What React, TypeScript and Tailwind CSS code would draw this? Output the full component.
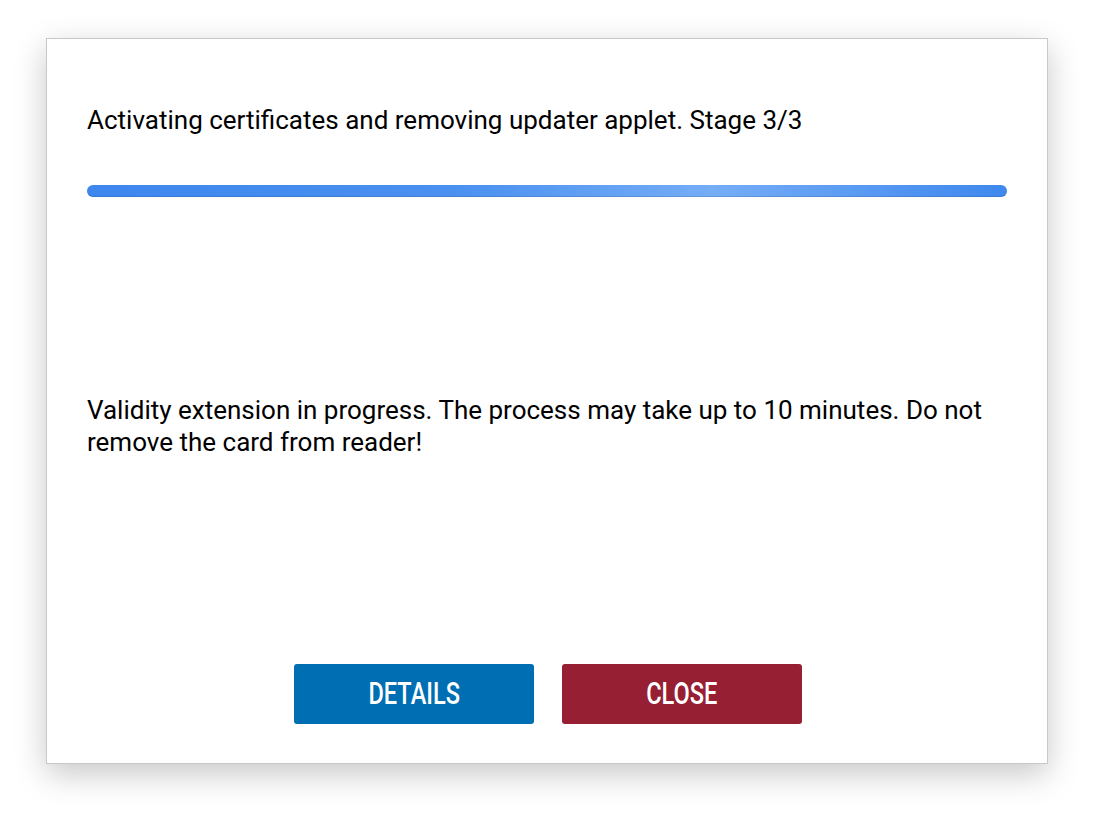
import React from 'react';

const App = () => {
  return (
    <div className="w-[1094px] h-[818px] bg-white pt-[38px] pl-[46px] font-['Roboto',sans-serif]">
      <div className="w-[1002px] h-[726px] bg-white border border-[#c8c8c8] shadow-[0_10px_30px_rgba(0,0,0,0.22)] flex flex-col px-[40px]">
        {/* Stage label */}
        <p className="mt-[65px] text-[26px] leading-[32px] text-black">
          Activating certificates and removing updater applet. Stage 3/3
        </p>

        {/* Progress bar */}
        <div className="mt-[49px] h-[12px] rounded-full bg-[linear-gradient(90deg,#3e86ee_0%,#4a90f0_40%,#75adf6_68%,#4f93f1_90%,#3f88ee_100%)] shadow-[inset_0_-1px_0_rgba(0,0,0,0.12)]" />

        {/* Info text */}
        <p className="mt-[197px] text-[26px] leading-[32px] text-black">
          Validity extension in progress. The process may take up to 10 minutes. Do not
          remove the card from reader!
        </p>

        {/* Buttons */}
        <div className="mt-auto mb-[39px] ml-[2px] flex justify-center gap-[28px]">
          <button className="w-[240px] h-[60px] rounded-[3px] bg-[#006eb3] text-white flex items-center justify-center">
            <span className="inline-block text-[31px] font-medium scale-x-[0.76]">DETAILS</span>
          </button>
          <button className="w-[240px] h-[60px] rounded-[3px] bg-[#961f33] text-white flex items-center justify-center">
            <span className="inline-block text-[31px] font-medium scale-x-[0.76]">CLOSE</span>
          </button>
        </div>
      </div>
    </div>
  );
};

export default App;
